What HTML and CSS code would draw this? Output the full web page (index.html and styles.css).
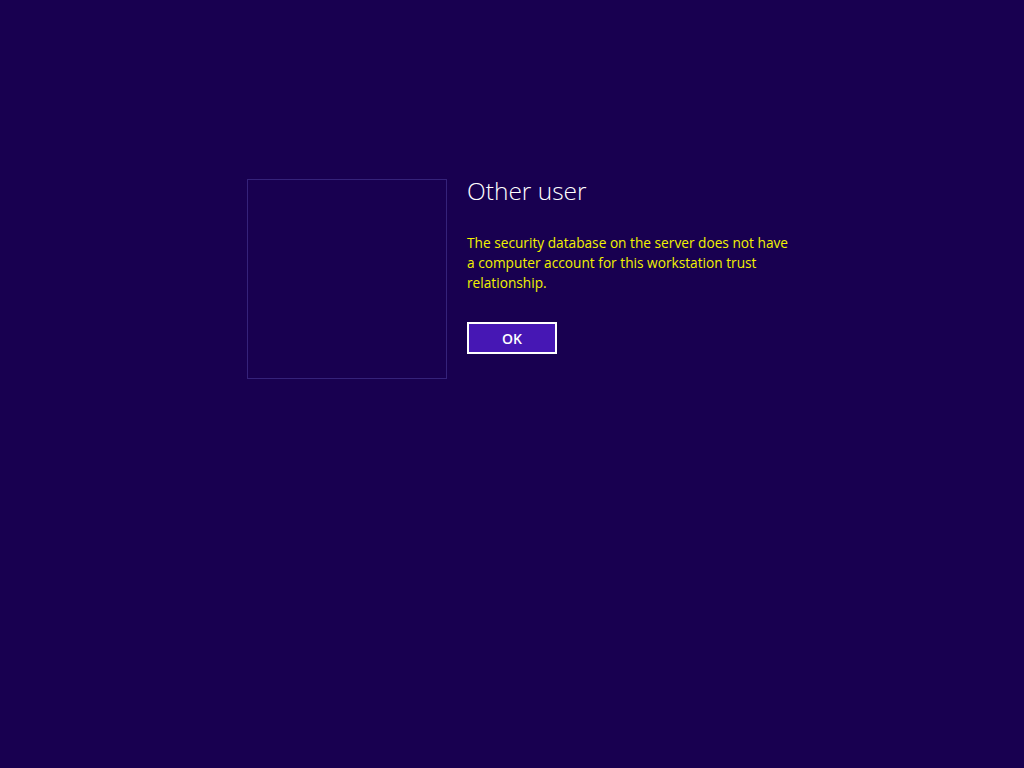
FILE: index.html
```html
<!DOCTYPE html>
<html lang="en">
<head>
  <meta charset="UTF-8" />
  <title>Other user</title>
  <link rel="stylesheet" href="styles.css">
</head>
<body>
  <div class="logon">
    <div class="user-tile"></div>
    <div class="logon-info">
      <h1 class="user-name">Other user</h1>
      <p class="message">The security database on the server does not have a computer account for this workstation trust relationship.</p>
      <button class="ok-btn">OK</button>
    </div>
  </div>
</body>
</html>
```

FILE: styles.css
```css
* { box-sizing: border-box; }

html, body {
  height: 100%;
}

body {
  margin: 0;
  background-color: #180050;
  font-family: "Open Sans", "Noto Sans", sans-serif;
}

.logon {
  display: flex;
  gap: 20px;
  padding-top: 179px;
  padding-left: 247px;
}

/* Recuadro de la imagen del usuario */
.user-tile {
  width: 200px;
  height: 200px;
  border: 1px solid #35227a;
}

.logon-info {
  width: 326px;
}

.user-name {
  margin: 0;
  font-size: 24.5px;
  font-weight: 300;
  line-height: 24px;
  color: #ffffff;
}

.message {
  margin: 30px 0 0 0;
  font-size: 13.7px;
  line-height: 20px;
  color: #f2f200;
}

.ok-btn {
  margin-top: 29px;
  width: 90px;
  height: 32px;
  background-color: #4617b4;
  color: #ffffff;
  border: 2px solid #ffffff;
  font-family: "Open Sans", "Noto Sans", sans-serif;
  font-size: 14px;
  font-weight: 600;
  cursor: pointer;
}
```
